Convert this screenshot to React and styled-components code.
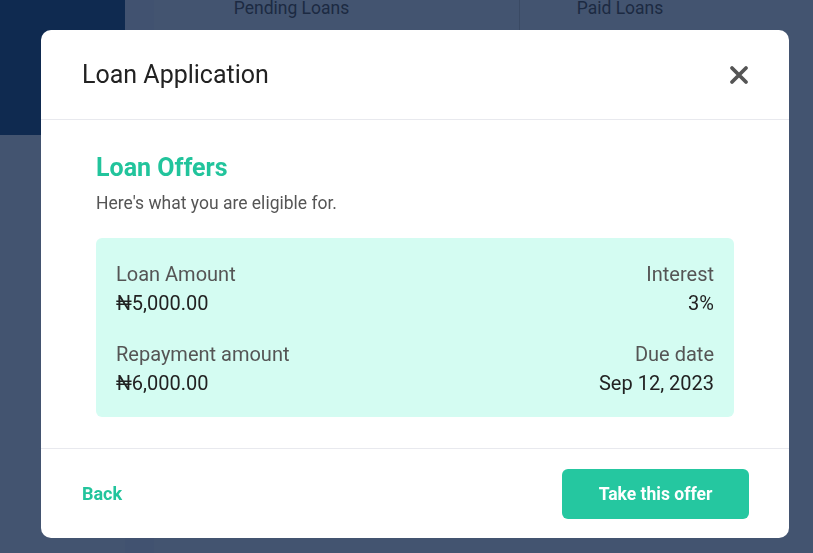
import styled, { createGlobalStyle } from "styled-components";

const GlobalStyle = createGlobalStyle`
  html, body {
    margin: 0;
    padding: 0;
    background: #435470;
    font-family: Roboto, "Liberation Sans", sans-serif;
  }
`;

const Page = styled.div`
  display: flex;
  width: 813px;
  height: 553px;
  background: #435470;
  overflow: hidden;
`;

const Sidebar = styled.div`
  width: 125px;
  height: 135px;
  background: #0f2a50;
  flex-shrink: 0;
`;

const Main = styled.div`
  flex: 1;
  display: flex;
  flex-direction: column;
  border-left: 29px solid #415270;
`;

const Tabs = styled.div`
  display: flex;
  height: 40px;
`;

const Tab = styled.div`
  width: ${(p) => p.width}px;
  padding-right: ${(p) => p.shift || 0}px;
  box-sizing: border-box;
  text-align: center;
  font-size: 17.5px;
  line-height: 16px;
  color: #1c2a42;
  border-right: ${(p) => (p.divider ? "1px solid #3a4a64" : "none")};
`;

const Modal = styled.div`
  position: fixed;
  left: 41px;
  top: 30px;
  width: 748px;
  height: 508px;
  background: #fff;
  border-radius: 10px;
  display: flex;
  flex-direction: column;
  overflow: hidden;
`;

const Header = styled.div`
  height: 89px;
  display: flex;
  align-items: center;
  justify-content: space-between;
  padding: 0 40px 0 41px;
  border-bottom: 1px solid #e8e9ee;
`;

const Title = styled.h2`
  margin: 0;
  font-size: 25px;
  font-weight: 400;
  color: #222;
`;

const Close = styled.button`
  border: none;
  background: none;
  padding: 0;
  width: 20px;
  height: 20px;
  cursor: pointer;
  display: flex;
`;

const Body = styled.div`
  flex: 1;
  padding: 35px 55px 0;
  display: flex;
  flex-direction: column;
`;

const OffersTitle = styled.h3`
  margin: 0;
  font-size: 25px;
  line-height: 26px;
  font-weight: 700;
  color: #22c49c;
`;

const Subtitle = styled.p`
  margin: 12px 0 0;
  font-size: 17.5px;
  line-height: 21px;
  color: #555;
`;

const Card = styled.div`
  margin-top: 24px;
  background: #d4fcf2;
  border-radius: 6px;
  padding: 25px 20px 23px;
  display: flex;
  flex-direction: column;
  gap: 29px;
`;

const Row = styled.div`
  display: flex;
  justify-content: space-between;
`;

const Field = styled.div`
  display: flex;
  flex-direction: column;
  gap: 7px;
  text-align: ${(p) => (p.right ? "right" : "left")};
`;

const Label = styled.span`
  font-size: 20px;
  line-height: 22px;
  color: #555;
`;

const Value = styled.span`
  font-size: 20px;
  line-height: 22px;
  color: #222;
`;

const Footer = styled.div`
  height: 89px;
  border-top: 1px solid #e8e9ee;
  display: flex;
  align-items: center;
  justify-content: space-between;
  padding: 0 40px 0 41px;
`;

const BackLink = styled.button`
  border: none;
  background: none;
  padding: 0;
  font-family: inherit;
  font-size: 18px;
  font-weight: 700;
  color: #22c49c;
  cursor: pointer;
`;

const Primary = styled.button`
  width: 187px;
  height: 50px;
  border: none;
  border-radius: 6px;
  background: #25c7a0;
  color: #fff;
  font-family: inherit;
  font-size: 17.5px;
  font-weight: 700;
  cursor: pointer;
`;

const CloseIcon = () => (
  <svg width="20" height="20" viewBox="0 0 20 20">
    <path
      d="M3 3 L17 17 M17 3 L3 17"
      stroke="#555"
      strokeWidth="3.8"
      strokeLinecap="round"
    />
  </svg>
);

const offer = [
  [
    { label: "Loan Amount", value: "₦5,000.00" },
    { label: "Interest", value: "3%", right: true },
  ],
  [
    { label: "Repayment amount", value: "₦6,000.00" },
    { label: "Due date", value: "Sep 12, 2023", right: true },
  ],
];

export default function App() {
  return (
    <>
      <GlobalStyle />
      <Page>
        <Sidebar />
        <Main>
          <Tabs>
            <Tab width={366} shift={90} divider>
              Pending Loans
            </Tab>
            <Tab width={200}>Paid Loans</Tab>
          </Tabs>
        </Main>
      </Page>
      <Modal>
        <Header>
          <Title>Loan Application</Title>
          <Close aria-label="Close">
            <CloseIcon />
          </Close>
        </Header>
        <Body>
          <OffersTitle>Loan Offers</OffersTitle>
          <Subtitle>Here's what you are eligible for.</Subtitle>
          <Card>
            {offer.map((row, i) => (
              <Row key={i}>
                {row.map((f) => (
                  <Field key={f.label} right={f.right}>
                    <Label>{f.label}</Label>
                    <Value>{f.value}</Value>
                  </Field>
                ))}
              </Row>
            ))}
          </Card>
        </Body>
        <Footer>
          <BackLink>Back</BackLink>
          <Primary>Take this offer</Primary>
        </Footer>
      </Modal>
    </>
  );
}
